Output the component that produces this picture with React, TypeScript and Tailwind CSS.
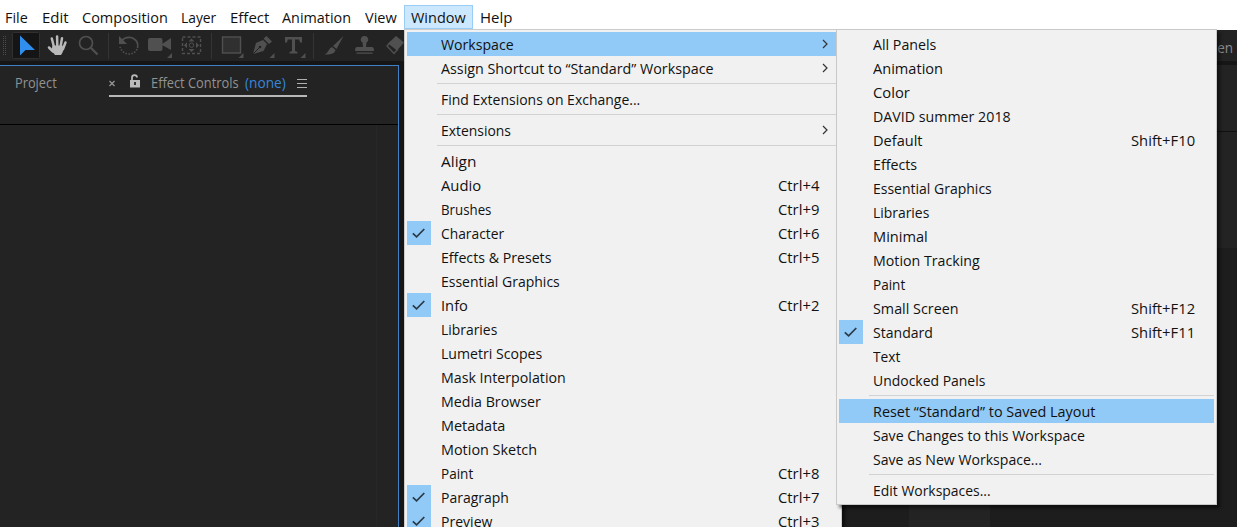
import { useLayoutEffect, useRef, useState } from "react";

/** A single-line label condensed horizontally to a given width. */
function Fit({ w, children }: { w: number; children: string }) {
  const ref = useRef<HTMLSpanElement>(null);
  const [scale, setScale] = useState(1);
  useLayoutEffect(() => {
    if (ref.current && ref.current.offsetWidth) setScale(w / ref.current.offsetWidth);
  }, [w]);
  return (
    <span className="block shrink-0 whitespace-nowrap" style={{ width: w }}>
      <span ref={ref} className="inline-block origin-left" style={{ transform: `scaleX(${scale})` }}>
        {children}
      </span>
    </span>
  );
}

type Item = { t: string; w: number; key?: string; on?: boolean; hot?: boolean; sub?: boolean } | null;

const windowMenu: Item[] = [
  { t: "Workspace", w: 72.5, hot: true, sub: true },
  { t: "Assign Shortcut to “Standard” Workspace", w: 272.5, sub: true },
  null,
  { t: "Find Extensions on Exchange...", w: 199.5 },
  null,
  { t: "Extensions", w: 69.5, sub: true },
  null,
  { t: "Align", w: 35 },
  { t: "Audio", w: 40.5, key: "Ctrl+4" },
  { t: "Brushes", w: 50.5, key: "Ctrl+9" },
  { t: "Character", w: 63.5, key: "Ctrl+6", on: true },
  { t: "Effects & Presets", w: 110.5, key: "Ctrl+5" },
  { t: "Essential Graphics", w: 118.5 },
  { t: "Info", w: 26.5, key: "Ctrl+2", on: true },
  { t: "Libraries", w: 56.5 },
  { t: "Lumetri Scopes", w: 101.5 },
  { t: "Mask Interpolation", w: 125 },
  { t: "Media Browser", w: 99.5 },
  { t: "Metadata", w: 64.5 },
  { t: "Motion Sketch", w: 96 },
  { t: "Paint", w: 32.5, key: "Ctrl+8" },
  { t: "Paragraph", w: 68, key: "Ctrl+7", on: true },
  { t: "Preview", w: 51.5, key: "Ctrl+3", on: true },
];

const workspaceMenu: Item[] = [
  { t: "All Panels", w: 63.5 },
  { t: "Animation", w: 70 },
  { t: "Color", w: 36.5 },
  { t: "DAVID summer 2018", w: 137.5 },
  { t: "Default", w: 49.5, key: "Shift+F10" },
  { t: "Effects", w: 44.5 },
  { t: "Essential Graphics", w: 118.5 },
  { t: "Libraries", w: 56.5 },
  { t: "Minimal", w: 54.5 },
  { t: "Motion Tracking", w: 107 },
  { t: "Paint", w: 32.5 },
  { t: "Small Screen", w: 86, key: "Shift+F12" },
  { t: "Standard", w: 60, key: "Shift+F11", on: true },
  { t: "Text", w: 27.5 },
  { t: "Undocked Panels", w: 112.5 },
  null,
  { t: "Reset “Standard” to Saved Layout", w: 222.5, hot: true },
  { t: "Save Changes to this Workspace", w: 212 },
  { t: "Save as New Workspace...", w: 169 },
  null,
  { t: "Edit Workspaces...", w: 118 },
];

function Rows({ items, keyWidth }: { items: Item[]; keyWidth: number }) {
  return (
    <>
      {items.map((it, i) =>
        it === null ? (
          <div key={i} className="flex h-[7px] items-center pl-[30px]">
            <div className="h-px w-full bg-[#d2d2d2]" />
          </div>
        ) : (
          <div key={i} className={`flex h-6 items-center ${it.hot ? "bg-[#91c9f7]" : ""}`}>
            <div className={`mr-[10px] flex h-6 w-6 shrink-0 items-center justify-center ${it.on ? "bg-[#91c9f7]" : ""}`}>
              {it.on && (
                <svg width="24" height="24" viewBox="0 0 24 24" fill="none" stroke="#2a3a46" strokeWidth="1.7">
                  <path d="M5.8 12.300 9.600 15.800 17.300 8" />
                </svg>
              )}
            </div>
            <Fit w={it.w}>{it.t}</Fit>
            {it.key && (
              <div className="mr-[19px] ml-auto">
                <Fit w={keyWidth}>{it.key}</Fit>
              </div>
            )}
            {it.sub && (
              <svg className="mr-[9px] ml-auto" width="7" height="10" viewBox="0 0 7 10" fill="none" stroke="#333" strokeWidth="1.2">
                <path d="m1 1 4 4-4 4" />
              </svg>
            )}
          </div>
        )
      )}
    </>
  );
}

function Tools() {
  return (
    <svg className="block shrink-0" width="404" height="31" viewBox="0 30 404 31">
      <path d="M3.500 36v19M5.500 36v19" stroke="#4a4a4a" strokeDasharray="1 1" />
      <rect x="12.500" y="32.500" width="27" height="26" rx="1" fill="#151515" stroke="#303030" />
      <path d="M20 35.500v20l5.500-5.500H35z" fill="#2f8eee" />
      <g stroke="#b9b9b9" strokeLinecap="round" strokeWidth="2.500">
        <path d="m54 47-2.200-8.500M57.300 46l-.2-9.500M60.500 47l1.500-8.700M63 49l2.500-6.500M53 51.500l-4-4" />
      </g>
      <path d="M52.500 45.500h10l1.500 3-1.500 4-1.500 2.500h-6l-3.500-4.500z" fill="#b9b9b9" />
      <g fill="none" stroke="#505050" strokeWidth="1.700">
        <circle cx="86" cy="43" r="6.500" />
        <path d="m91 48 6.500 6.500" strokeWidth="2.300" />
        <path d="M121.500 41c4-5 12-5 15.500 1 1.300 2.200 1 4 .5 6" />
        <path d="M137 49c-3 7-14 7-17-2" strokeDasharray="1.500 1.500" />
      </g>
      <path d="M119 36v8h8z" fill="#505050" />
      <path d="M108.500 33v26M211.500 33v26M313.500 33v26" stroke="#343434" />
      <rect x="148" y="38" width="14.500" height="13" rx="2" fill="#505050" />
      <path d="m162 44 9-6v12l-9-5zM172 53v5h-5zM243.500 53v5h-5zM274.500 53v5h-5zM305.500 53v5h-5z" fill="#505050" />
      <rect x="182.500" y="37" width="18" height="16.500" fill="none" stroke="#505050" strokeWidth="1.400" strokeDasharray="3 2" />
      <path d="m191.500 38.500 3 3h-6zM191.500 52l3-3h-6zM184 45.200l3-3v6zM199 45.200l-3-3v6z" fill="#505050" />
      <circle cx="191.500" cy="45.200" r="2.200" fill="none" stroke="#505050" />
      <rect x="222.500" y="37" width="18" height="16" fill="#303030" stroke="#505050" strokeWidth="1.400" />
      <path d="m253 54 3-11 7-3 4 4-3.500 7zM263.500 38.500l3-2.500 5.500 5.500-3 2.500z" fill="#505050" />
      <path d="m253 54 6-6" stroke="#232323" />
      <circle cx="260" cy="47" r="1.300" fill="#232323" />
      <path d="M285 37h17v5.500h-2l-.8-3H295V51l2.500 1v1.500h-8V52l2.500-1V39.500h-4.200l-.8 3h-2z" fill="#505050" />
      <path d="m343.500 36-7 13-3.500-3zM332 47l3.500 3c-1 4-6 5-11 4.500 4-1.500 4-6 7.500-7.500z" fill="#505050" />
      <path d="M364.500 36a3.500 3.500 0 0 1 2 6.500l-.5 4.500h6q2 0 2 4h-19q0-4 2-4h6l-.5-4.500a3.500 3.500 0 0 1 2-6.500zM356.500 52.500h16v1.300h-16z" fill="#505050" />
      <path d="m396 36 8 6.500-7 8-9-7z" fill="#505050" />
      <path d="m391 41.500-4 4.500 7 7.500 4-4.500" fill="none" stroke="#505050" strokeWidth="1.400" />
    </svg>
  );
}

export default function App() {
  return (
    <div className="relative flex h-[527px] w-[1237px] flex-col overflow-hidden bg-[#1d1d1d] font-['Open_Sans',sans-serif] text-[15px] leading-6 text-[#111]">
      <div className="flex h-[30px] shrink-0 items-start bg-white pt-[5px] pl-[5px]">
        <div className="mr-[14px]"><Fit w={23}>File</Fit></div>
        <div className="mr-[13px]"><Fit w={27}>Edit</Fit></div>
        <div className="mr-[13px]"><Fit w={86}>Composition</Fit></div>
        <div className="mr-[14px]"><Fit w={35}>Layer</Fit></div>
        <div className="mr-[13px]"><Fit w={39}>Effect</Fit></div>
        <div className="mr-[14px]"><Fit w={69}>Animation</Fit></div>
        <div className="mr-[7px]"><Fit w={32}>View</Fit></div>
        <div className="mr-[7px] flex h-6 w-[69px] justify-center border border-[#99cdf5] bg-[#cce8ff] leading-[22px]">
          <Fit w={55}>Window</Fit>
        </div>
        <Fit w={32}>Help</Fit>
      </div>

      <div className="flex h-[31px] shrink-0 justify-between bg-[#232323]">
        <Tools />
        <div className="flex w-[33px] items-center text-[14px] text-[#8c8c8c]"><div className="mt-[5px]"><Fit w={29}>reen</Fit></div></div>
      </div>

      <div className="flex min-h-0 flex-1 justify-between bg-[#161616] pt-1">
        <div className="flex w-[399px] flex-col border-t border-r border-[#3f7fc4] bg-[#232323] text-[14px] text-[#929292]">
          <div className="flex h-[59px] shrink-0 border-b border-black pl-[15px]">
            <div className="mt-[5px] w-[94px]"><Fit w={42}>Project</Fit></div>
            <div className="mt-[5px] flex h-[26px] w-[198px] border-b-2 border-[#b8b8b8] leading-6">
              <svg className="mt-[9px]" width="6" height="7" viewBox="0 0 6 7" stroke="#999" strokeWidth="1.200"><path d="m.5 1 5 5m0-5-5 5" /></svg>
              <svg className="mt-[3px] ml-[14px]" width="12" height="14" viewBox="0 0 12 14" fill="none">
                <path d="M3 6V3.500C3 .2 8 .2 8 3.500" stroke="#bbb" strokeWidth="1.700" />
                <path d="M1 6h10v7.500H1z" fill="#bbb" />
                <path d="M6 8v3" stroke="#333" strokeWidth="2" />
              </svg>
              <div className="ml-[10px]"><Fit w={88}>Effect Controls</Fit></div>
              <div className="ml-[6px] text-[#3686dc]"><Fit w={41}>(none)</Fit></div>
              <svg className="mt-[8px] ml-[11px]" width="10" height="9" viewBox="0 0 10 9" stroke="#b0b0b0"><path d="M0 .5h10M0 4.500h10M0 8.500h10" /></svg>
            </div>
          </div>
          <div className="flex flex-1">
            <div className="w-[377px] border-r border-[#272727]" />
          </div>
        </div>
        <div className="flex w-[395px] flex-col">
          <div className="h-[183px] bg-[#232323] pt-[66px]"><div className="h-px bg-[#101010]" /></div>
          <div className="flex flex-1 bg-[#1d1d1d] pl-[67px]"><div className="w-[81px] bg-[#232323]" /></div>
        </div>
      </div>

      <div className="absolute top-[29px] left-[404px] h-[520px] w-[438px] border border-[#ccc] bg-[#f1f1f1] pt-[2px] pr-[3px] pl-[2px] shadow-[3px_3px_3px_rgba(0,0,0,0.5)]">
        <Rows items={windowMenu} keyWidth={41.5} />
      </div>
      <div className="absolute top-[29px] left-[836px] h-[476px] w-[381px] border border-[#c9c9c9] bg-[#f1f1f1] px-[2px] pt-[2px] shadow-[3px_3px_3px_rgba(0,0,0,0.5)]">
        <Rows items={workspaceMenu} keyWidth={64} />
      </div>
    </div>
  );
}
